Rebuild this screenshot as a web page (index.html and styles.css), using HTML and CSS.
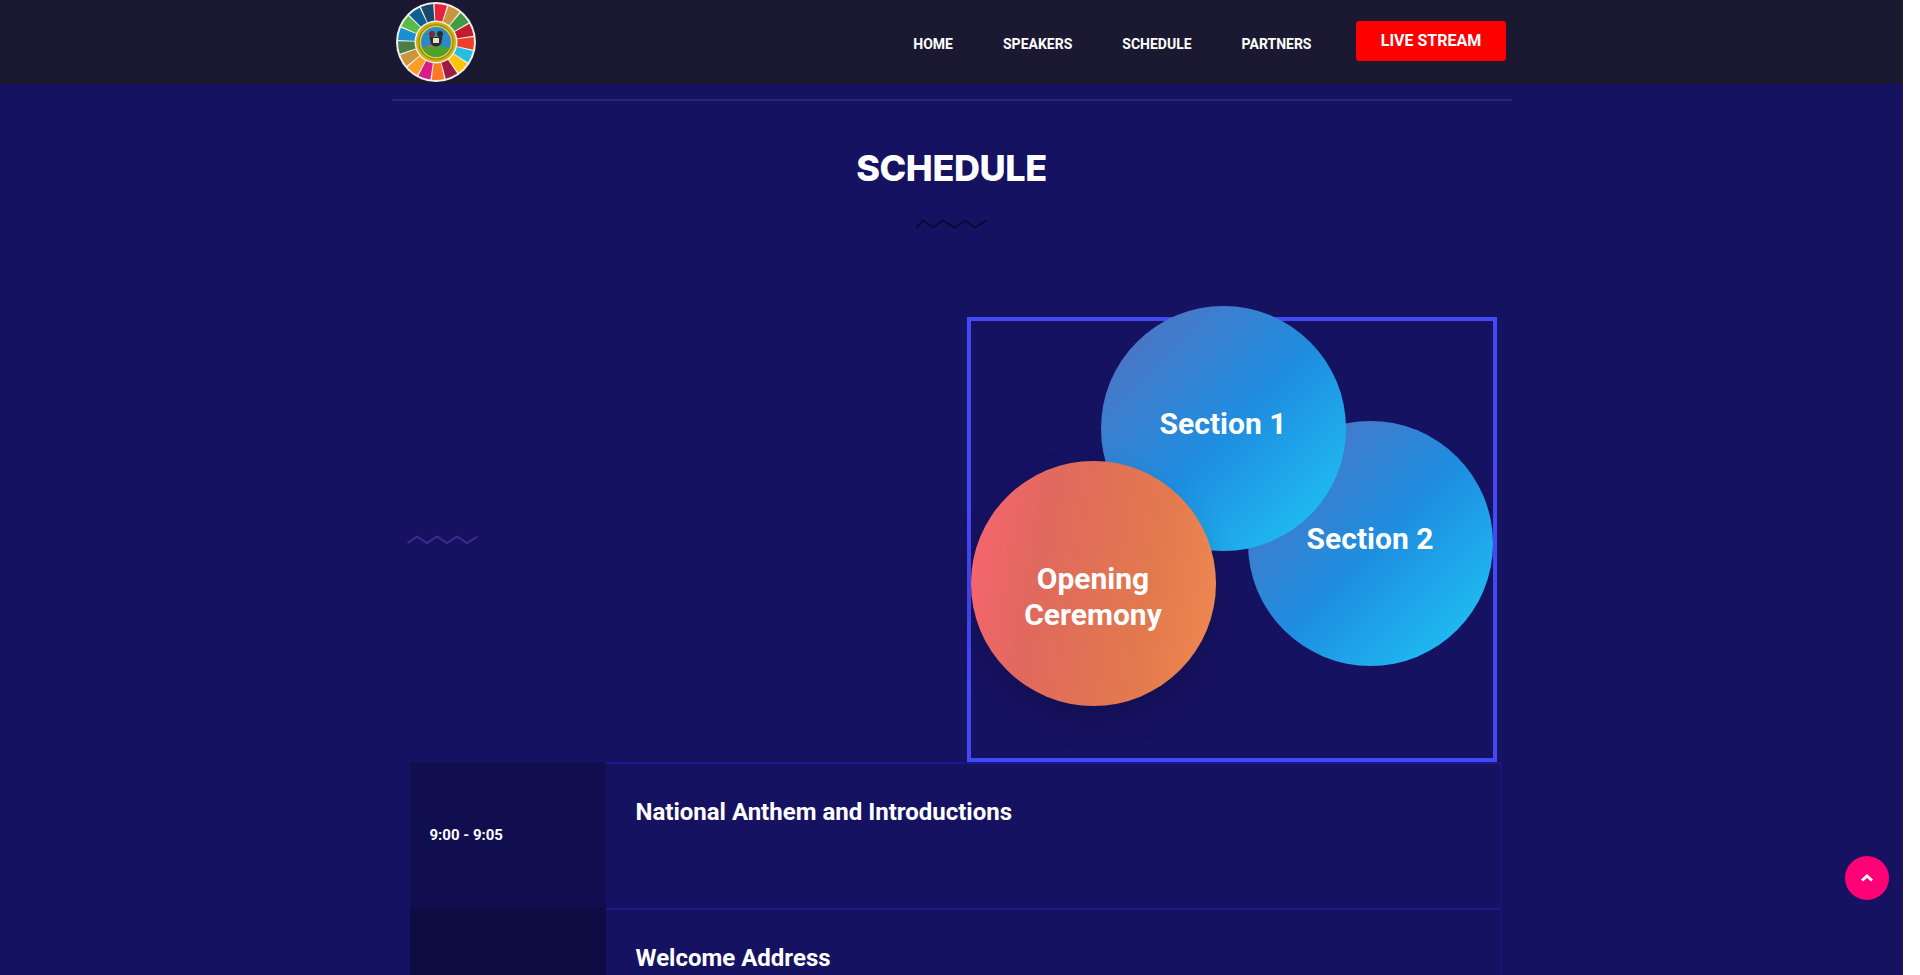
FILE: index.html
```html
<!DOCTYPE html>
<html lang="en">
<head>
    <meta charset="UTF-8">
    <meta name="viewport" content="width=device-width, initial-scale=1.0">
    <title>Schedule</title>
    <link rel="stylesheet" href="styles.css">
</head>
<body>
    <header class="site-header">
        <div class="header-inner">
            <a class="logo" href="#">
                <svg width="80" height="80" viewBox="0 0 80 80">
                    <circle cx="40" cy="40" r="40" fill="#f1f1ef"/>
                    <g fill="none" stroke-width="19">
                        <circle cx="40" cy="40" r="28.5" pathLength="17" stroke-dasharray="0.9 16.1" stroke="#e5243b" transform="rotate(-92.1 40 40)"/>
                        <circle cx="40" cy="40" r="28.5" pathLength="17" stroke-dasharray="0.9 16.1" stroke="#c9963f" transform="rotate(-70.9 40 40)"/>
                        <circle cx="40" cy="40" r="28.5" pathLength="17" stroke-dasharray="0.9 16.1" stroke="#3f9c44" transform="rotate(-49.8 40 40)"/>
                        <circle cx="40" cy="40" r="28.5" pathLength="17" stroke-dasharray="0.9 16.1" stroke="#c5192d" transform="rotate(-28.6 40 40)"/>
                        <circle cx="40" cy="40" r="28.5" pathLength="17" stroke-dasharray="0.9 16.1" stroke="#ee3f2a" transform="rotate(-7.4 40 40)"/>
                        <circle cx="40" cy="40" r="28.5" pathLength="17" stroke-dasharray="0.9 16.1" stroke="#26bde2" transform="rotate(13.8 40 40)"/>
                        <circle cx="40" cy="40" r="28.5" pathLength="17" stroke-dasharray="0.9 16.1" stroke="#fcc30b" transform="rotate(34.9 40 40)"/>
                        <circle cx="40" cy="40" r="28.5" pathLength="17" stroke-dasharray="0.9 16.1" stroke="#a21942" transform="rotate(56.1 40 40)"/>
                        <circle cx="40" cy="40" r="28.5" pathLength="17" stroke-dasharray="0.9 16.1" stroke="#fd7a25" transform="rotate(77.3 40 40)"/>
                        <circle cx="40" cy="40" r="28.5" pathLength="17" stroke-dasharray="0.9 16.1" stroke="#dd1b87" transform="rotate(98.5 40 40)"/>
                        <circle cx="40" cy="40" r="28.5" pathLength="17" stroke-dasharray="0.9 16.1" stroke="#fd9d24" transform="rotate(119.6 40 40)"/>
                        <circle cx="40" cy="40" r="28.5" pathLength="17" stroke-dasharray="0.9 16.1" stroke="#c9963f" transform="rotate(140.8 40 40)"/>
                        <circle cx="40" cy="40" r="28.5" pathLength="17" stroke-dasharray="0.9 16.1" stroke="#4a7f45" transform="rotate(162 40 40)"/>
                        <circle cx="40" cy="40" r="28.5" pathLength="17" stroke-dasharray="0.9 16.1" stroke="#1a8fcf" transform="rotate(183.2 40 40)"/>
                        <circle cx="40" cy="40" r="28.5" pathLength="17" stroke-dasharray="0.9 16.1" stroke="#5cba47" transform="rotate(204.3 40 40)"/>
                        <circle cx="40" cy="40" r="28.5" pathLength="17" stroke-dasharray="0.9 16.1" stroke="#0f5f96" transform="rotate(225.5 40 40)"/>
                        <circle cx="40" cy="40" r="28.5" pathLength="17" stroke-dasharray="0.9 16.1" stroke="#19486a" transform="rotate(246.7 40 40)"/>
                    </g>
                    <circle cx="40" cy="40" r="21.500" fill="#f1f1ef"/>
                    <circle cx="40" cy="40" r="20" fill="#d2ae06"/>
                    <circle cx="40" cy="40" r="17.500" fill="#7c7f1c"/>
                    <circle cx="40" cy="40" r="16.500" fill="#e4cf3a"/>
                    <circle cx="40" cy="40" r="15" fill="#2b8ac8"/>
                    <path d="M26 46 Q40 42 54 46 Q49 55 40 55 Q31 55 26 46Z" fill="#4fa12e"/>
                    <path d="M28 45 L37 43 L37 45Z" fill="#e8622a"/>
                    <circle cx="36" cy="32" r="3" fill="#7a2a22"/>
                    <circle cx="44" cy="32" r="3" fill="#2b2b2b"/>
                    <path d="M33.500 35 H46.500 L45 42 Q40 47 35 42Z" fill="#2b2b2b"/>
                    <rect x="37" y="36" width="6" height="5" fill="#e9e2c0"/>
                </svg>
            </a>
            <nav class="main-nav">
                <a href="#">Home</a>
                <a href="#">Speakers</a>
                <a href="#">Schedule</a>
                <a href="#">Partners</a>
                <a class="live-btn" href="#">Live Stream</a>
            </nav>
        </div>
    </header>

    <main class="container">
        <h1 class="section-title">SCHEDULE</h1>
        <svg class="title-wave" width="71" height="10" viewBox="0 0 71 10">
            <path d="M0.500 8.500 L7 1.500 L17 8.500 L27 1.500 L39 8.500 L49 1.500 L59 8.500 L70.500 1.500" fill="none" stroke="#0a0835" stroke-width="2"/>
        </svg>

        <div class="tabs-row">
            <svg class="side-wave" width="71" height="10" viewBox="0 0 71 10">
                <path d="M0.500 8 L10 1.500 L20 8 L30 1.500 L40 8 L50 1.500 L60 8 L70.500 1.500" fill="none" stroke="#3f2a8e" stroke-width="2"/>
            </svg>
            <div class="tabs-box">
                <a class="bubble bubble-two" href="#">Section 2</a>
                <a class="bubble bubble-one" href="#">Section 1</a>
                <a class="bubble bubble-open" href="#">Opening<br>Ceremony</a>
            </div>
        </div>

        <div class="schedule-list">
            <div class="schedule-row">
                <div class="time-cell">9:00 - 9:05</div>
                <div class="info-cell"><h3>National Anthem and Introductions</h3></div>
            </div>
            <div class="schedule-row row-alt">
                <div class="time-cell"></div>
                <div class="info-cell"><h3>Welcome Address</h3></div>
            </div>
        </div>
    </main>

    <a class="back-top" href="#">
        <svg width="14" height="10" viewBox="0 0 14 10">
            <path d="M2 7.500 L7 3 L12 7.500" fill="none" stroke="#fff" stroke-width="3"/>
        </svg>
    </a>
</body>
</html>
```

FILE: styles.css
```css
html {
    background-color: #fff;
    height: 100%;
    overflow: hidden;
}
body {
    margin: 0;
    width: 1903px;
    height: 975px;
    overflow: hidden;
    position: relative;
    background-color: #161262;
    font-family: Roboto, Arial, sans-serif;
    color: #fff;
}
a {
    color: #fff;
    text-decoration: none;
}

/* header */
.site-header {
    height: 84px;
    background-color: #1b1931;
}
.header-inner {
    width: 1120px;
    margin: 0 auto;
    height: 84px;
    display: flex;
    justify-content: space-between;
    padding: 0 6px 0 4px;
    box-sizing: border-box;
}
.logo {
    display: block;
    margin-top: 2px;
    height: 80px;
    filter: blur(.4px);
}
.main-nav {
    display: flex;
    align-items: flex-start;
}
.main-nav a {
    font-size: 14px;
    font-weight: 700;
    text-transform: uppercase;
    line-height: 20px;
    margin: 34px 50px 0 0;
}
.main-nav .live-btn {
    margin: 21px 0 0 -6px;
    width: 150px;
    height: 40px;
    padding-left: 1px;
    box-sizing: border-box;
    line-height: 40px;
    text-align: center;
    font-size: 16px;
    background-color: #ff0000;
    border-radius: 3px;
}

/* content */
.container {
    width: 1120px;
    margin: 15px auto 0;
    border-top: 2px solid #2a2675;
}
.section-title {
    margin: 0;
    padding-top: 45px;
    font-family: Inter, Arial, sans-serif;
    font-size: 36px;
    font-weight: 800;
    letter-spacing: -.4px;
    line-height: 44px;
    text-align: center;
}
.title-wave {
    display: block;
    margin: 29px auto 0;
}
.tabs-row {
    position: relative;
    height: 445px;
    margin-top: 88px;
}
.side-wave {
    position: absolute;
    left: 15px;
    top: 218px;
}
.tabs-box {
    position: absolute;
    left: 575px;
    top: 0;
    width: 530px;
    height: 445px;
    box-sizing: border-box;
    border: 4px solid #4249f5;
}
.bubble {
    position: absolute;
    width: 245px;
    height: 245px;
    box-sizing: border-box;
    padding-top: 100px;
    border-radius: 50%;
    font-size: 30px;
    font-weight: 700;
    line-height: 36px;
    text-align: center;
    background-image: linear-gradient(135deg, #5a6ebd 0%, #1e8ee0 52%, #1fcaf8 100%);
}
.bubble-one {
    left: 130px;
    top: -15px;
}
.bubble-two {
    left: 277px;
    top: 100px;
}
.bubble-open {
    left: 0;
    top: 140px;
    background-image: linear-gradient(100deg, #fb6472 0%, #e0695e 30%, #e2794e 70%, #f08a50 100%);
    box-shadow: 0 15px 30px rgba(0, 0, 0, .15);
}

/* schedule rows */
.schedule-list {
    margin-left: 18px;
    width: 1091px;
}
.schedule-row {
    display: flex;
    height: 146px;
}
.time-cell {
    width: 196px;
    box-sizing: border-box;
    padding-left: 20px;
    background-color: #110e50;
    display: flex;
    align-items: center;
    font-size: 15px;
    font-weight: 700;
}
.row-alt .time-cell {
    background-color: #0e0c42;
}
.info-cell {
    flex: 1;
    box-sizing: border-box;
    padding: 34px 30px 0;
    border-top: 2px solid #1c178c;
    border-right: 1px solid #1c178c;
}
.info-cell h3 {
    margin: 0;
    font-size: 24px;
    font-weight: 700;
    line-height: 28px;
}

/* back to top */
.back-top {
    position: absolute;
    left: 1845px;
    top: 856px;
    width: 44px;
    height: 44px;
    border-radius: 50%;
    background-color: #ff0076;
    display: flex;
    align-items: center;
    justify-content: center;
}
```
